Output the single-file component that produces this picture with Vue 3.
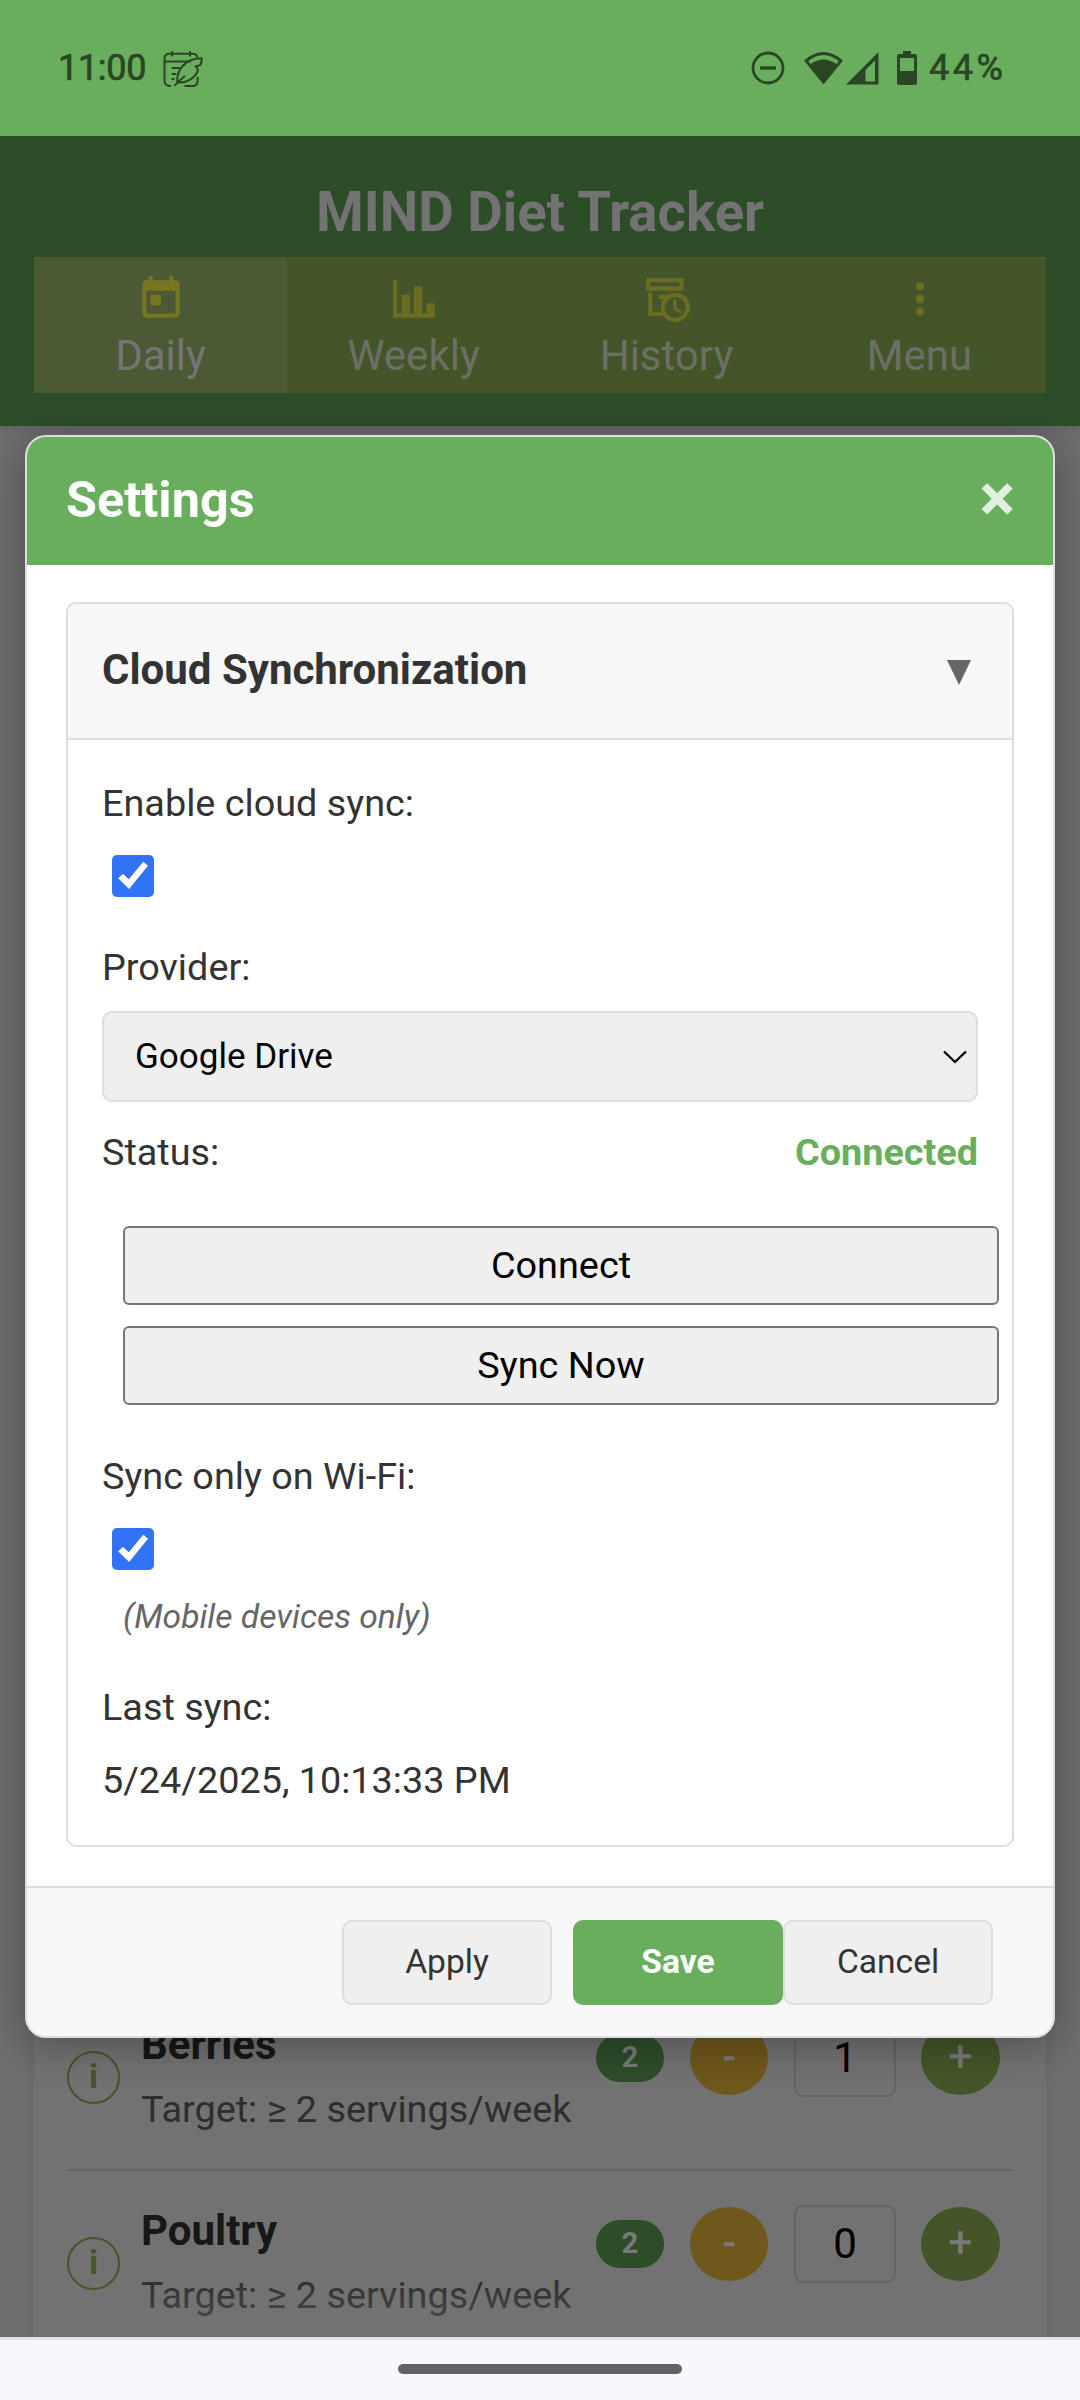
<script setup>
import { ref } from 'vue'

const tabs = [
  { id: 'daily', label: 'Daily' },
  { id: 'weekly', label: 'Weekly' },
  { id: 'history', label: 'History' },
  { id: 'menu', label: 'Menu' },
]
const activeTab = ref('daily')

const foods = [
  { name: 'Berries', target: 'Target: ≥ 2 servings/week', total: 2, today: 1 },
  { name: 'Poultry', target: 'Target: ≥ 2 servings/week', total: 2, today: 0 },
]
</script>

<template>
  <div class="screen">
    <div class="statusbar">
      <span class="clock">11:00</span>
      <svg class="note" width="40" height="38" viewBox="0 0 40 38" fill="none" stroke="currentColor" stroke-width="2">
        <path d="M8 36H7Q1.500 36 1.500 30.500V8.500Q1.500 3.700 6.500 3.700H30Q33.500 3.700 34.500 7.500M1.500 11.600H28M9.200 1V6.500M27 1V6.500M21.500 36H29.500Q34.600 36 34.600 31V27M8.500 18H17M8.500 24H13.500M8.500 29H11.500" />
        <path d="M11.500 36Q15 31.500 22 26M14.300 32.500C13.500 20 22 8.500 38.500 8.300Q39 12 37.300 15L32.800 16.500L35 20C33 27 25 33 14.300 32.500Z" />
      </svg>
      <div class="spacer"></div>
      <svg class="dnd" width="34" height="34" viewBox="0 0 34 34" fill="none" stroke="currentColor">
        <circle cx="17" cy="17" r="15" stroke-width="2.800" />
        <path d="M9 17H25" stroke-width="3.300" />
      </svg>
      <svg class="wifi" width="39" height="34" viewBox="0 0 39 34">
        <path fill="currentColor" fill-rule="evenodd" d="M0 9.500Q19.500-7.500 39 9.500L19.500 33.500ZM4.300 10L6.500 13Q19.500 4 32.500 13L34.700 10Q19.500-2 4.300 10Z" />
      </svg>
      <svg class="cell" width="33" height="34" viewBox="0 0 33 34">
        <path fill="currentColor" fill-rule="evenodd" d="M0 33.500L32.500 1V33.500ZM19.500 19V30.500H29V9.500Z" />
      </svg>
      <svg class="battery" width="20" height="35" viewBox="0 0 20 35">
        <path fill="currentColor" fill-rule="evenodd" d="M6 0H14V3H18Q20 3 20 5V32Q20 34 18 34H2Q0 34 0 32V5Q0 3 2 3H6ZM3 7V20H17V7Z" />
      </svg>
      <span class="percent">44%</span>
    </div>

    <header class="app-header">
      <h1>MIND Diet Tracker</h1>
      <nav>
        <div v-for="tab in tabs" :key="tab.id" class="tab" :class="{ active: tab.id === activeTab }">
          <svg width="50" height="50" viewBox="0 0 24 24" fill="currentColor">
            <path v-if="tab.id === 'daily'" d="M7 10h5v5H7zM19 3h-1V1h-2v2H8V1H6v2H5c-1.110 0-2 .9-2 2v14a2 2 0 0 0 2 2h14a2 2 0 0 0 2-2V5a2 2 0 0 0-2-2zm0 16H5V8h14v11z" />
            <path v-else-if="tab.id === 'weekly'" d="M22 21H2V3h2v16h2v-9h4v9h2V6h4v13h2v-5h4v7z" />
            <g v-else-if="tab.id === 'history'" fill="none" stroke="currentColor">
              <path d="M3 3H19V7H3ZM4 9V19H10.500M8 11H12" stroke-width="2" />
              <circle cx="16" cy="16" r="6" stroke-width="2" />
              <path d="M15.750 12V16.600L19 18.500" stroke-width="1.500" />
            </g>
            <path v-else d="M12 16a2 2 0 1 1 0 4 2 2 0 0 1 0-4m0-6a2 2 0 1 1 0 4 2 2 0 0 1 0-4m0-6a2 2 0 1 1 0 4 2 2 0 0 1 0-4z" />
          </svg>
          <span>{{ tab.label }}</span>
        </div>
      </nav>
    </header>

    <main>
      <div class="card">
        <div v-for="food in foods" :key="food.name" class="food">
          <div class="info">i</div>
          <div class="desc">
            <div class="name">{{ food.name }}</div>
            <div class="target">{{ food.target }}</div>
          </div>
          <div class="controls">
            <span class="badge">{{ food.total }}</span>
            <span class="round minus">-</span>
            <span class="count">{{ food.today }}</span>
            <span class="round plus">+</span>
          </div>
        </div>
      </div>
      <div class="fade"></div>
    </main>

    <div class="gesture"><div class="pill"></div></div>

    <section class="modal">
      <div class="modal-head">
        <h2>Settings</h2>
        <span class="close">×</span>
      </div>
      <div class="panel">
        <div class="panel-head">
          <h3>Cloud Synchronization</h3>
          <svg width="24" height="25" viewBox="0 0 24 25"><path d="M0 0H24L12 25Z" fill="#666" /></svg>
        </div>
        <div class="panel-body">
          <div class="label">Enable cloud sync:</div>
          <svg class="check" width="42" height="42" viewBox="0 0 42 42">
            <rect width="42" height="42" rx="5" fill="#3273f6" />
            <path d="M6.100 23.300L11 19L16.800 24.300L31.200 6.700L36 10.700L17.100 34Z" fill="#fff" />
          </svg>
          <div class="label provider">Provider:</div>
          <div class="select">
            <span>Google Drive</span>
            <svg width="24" height="14" viewBox="0 0 24 14" fill="none" stroke="#000" stroke-width="2.300"><path d="M1 1.500L12 12L23 1.500" /></svg>
          </div>
          <div class="status label"><span>Status:</span><b>Connected</b></div>
          <div class="actions">
            <div class="wide">Connect</div>
            <div class="wide">Sync Now</div>
          </div>
          <div class="label wifi-label">Sync only on Wi-Fi:</div>
          <svg class="check" width="42" height="42" viewBox="0 0 42 42">
            <rect width="42" height="42" rx="5" fill="#3273f6" />
            <path d="M6.100 23.300L11 19L16.800 24.300L31.200 6.700L36 10.700L17.100 34Z" fill="#fff" />
          </svg>
          <div class="hint">(Mobile devices only)</div>
          <div class="label last">Last sync:</div>
          <div class="label date">5/24/2025, 10:13:33 PM</div>
        </div>
      </div>
      <div class="modal-foot">
        <div class="btn apply">Apply</div>
        <div class="btn save">Save</div>
        <div class="btn">Cancel</div>
      </div>
    </section>
  </div>
</template>

<style>
body { margin: 0; }
</style>

<style scoped>
.screen, .screen * { box-sizing: border-box; }
.screen {
  position: relative;
  width: 1080px;
  height: 2400px;
  overflow: hidden;
  display: flex;
  flex-direction: column;
  background: #6e6e6e;
  font-family: Roboto, sans-serif;
  color: #333;
}
svg { display: block; flex: none; }
h1, h2, h3 { margin: 0; font-weight: 700; }

.statusbar {
  flex: none;
  height: 136px;
  background: #69ae5d;
  color: #2a4624;
  display: flex;
  align-items: center;
  padding: 0 73px 0 58px;
  -webkit-text-stroke: 0.7px #2a4624;
}
.statusbar svg { -webkit-text-stroke: 0; }
.clock { font-size: 36px; width: 105px; letter-spacing: -0.3px; }
.note { margin-top: 2px; }
.spacer { flex: 1; }
.wifi { margin-left: 19px; }
.cell { margin-left: 3px; }
.battery { margin-left: 18px; }
.percent { font-size: 36px; width: 78px; margin-left: 12px; letter-spacing: 3.500px; white-space: nowrap; }

.app-header {
  flex: none;
  height: 290px;
  padding: 42px 34px 0;
  background: #2d4d29;
  box-shadow: 0 4px 10px rgba(0, 0, 0, 0.1);
}
h1 {
  font-size: 54.600px;
  line-height: 69px;
  text-align: center;
  color: #737373;
}
nav {
  display: flex;
  height: 136px;
  margin-top: 10px;
  border-top: 2px solid #4b5934;
  background: #445629;
}
.tab {
  flex: 1;
  display: flex;
  flex-direction: column;
  align-items: center;
  padding-top: 15px;
  color: #6b6d22;
}
.tab span { font-size: 42px; line-height: 50px; margin-top: 7px; color: #6c6f66; }
.tab.active { background: #4b5a34; color: #777522; }
.tab.active span { color: #757575; }

main {
  position: relative;
  flex: 1;
  overflow: hidden;
  display: flex;
  flex-direction: column;
  justify-content: flex-end;
  padding: 0 34px;
}
.card {
  flex: none;
  height: 1911px;
  margin-bottom: -20px;
  padding: 0 33px;
  background: #727272;
  display: flex;
  flex-direction: column;
  justify-content: flex-end;
  box-shadow: 0 4px 10px rgba(0, 0, 0, 0.08);
}
.food {
  flex: none;
  height: 186px;
  display: flex;
  border-bottom: 2px solid #646464;
}
.info {
  width: 53px;
  height: 53px;
  margin-top: 66px;
  border: 2px solid #445629;
  border-radius: 50%;
  color: #445629;
  font-weight: 700;
  font-size: 34px;
  line-height: 47px;
  text-align: center;
}
.desc { margin: 35px 0 0 21px; flex: 1; white-space: nowrap; }
.name { font-size: 42px; line-height: 50px; font-weight: 700; color: #171717; }
.target { font-size: 37.800px; line-height: 44px; margin-top: 17px; color: #2e2e2e; }
.controls { height: 78px; margin: 34px 13px 0 0; display: flex; align-items: center; color: #7a7a7a; }
.badge {
  width: 68px;
  height: 48px;
  border-radius: 24px;
  background: #2d4d29;
  font-size: 29.400px;
  font-weight: 700;
  line-height: 46px;
  text-align: center;
}
.round {
  width: 78px;
  height: 74px;
  border-radius: 50%;
  font-size: 42px;
  line-height: 72px;
  text-align: center;
  -webkit-text-stroke: 0.5px #7a7a7a;
}
.minus { margin: 0 26px; background: #6f581b; }
.plus { margin-left: 25px; width: 79px; background: #445629; }
.count {
  width: 102px;
  height: 78px;
  border: 2px solid #646464;
  border-radius: 9px;
  color: #000;
  font-size: 42px;
  line-height: 73px;
  text-align: center;
}
.fade {
  position: absolute;
  left: 67px;
  right: 67px;
  bottom: 0;
  height: 60px;
  background: linear-gradient(rgba(114, 114, 114, 0), rgba(114, 114, 114, 0.500));
}

.gesture {
  flex: none;
  height: 63px;
  border-top: 3px solid #e2e3e8;
  background: #f9f7fe;
  padding-top: 24px;
}
.pill { width: 284px; height: 10px; margin: 0 auto; border-radius: 5px; background: #626266; }

.modal {
  position: absolute;
  left: 25px;
  top: 435px;
  width: 1030px;
  height: 1603px;
  border: 2px solid #ddd;
  border-radius: 21px;
  overflow: hidden;
  background: #fff;
  box-shadow: 0 8px 42px rgba(0, 0, 0, 0.3);
}
.modal-head {
  height: 128px;
  padding: 0 38px 0 39px;
  display: flex;
  align-items: center;
  justify-content: space-between;
  background: #69ae5d;
}
h2 { font-size: 50.400px; line-height: 60px; color: #fff; margin-bottom: 2px; }
.close { font-size: 67px; line-height: 60px; font-weight: 700; color: #e1efdf; margin-bottom: 6px; }
.panel {
  margin: 37px 39px 39px;
  height: 1245px;
  border: 2px solid #ddd;
  border-radius: 10px;
  overflow: hidden;
}
.panel-head {
  height: 136px;
  padding: 0 41px 0 34px;
  display: flex;
  align-items: center;
  justify-content: space-between;
  background: #f7f7f7;
  border-bottom: 2px solid #ddd;
}
h3 { font-size: 42px; line-height: 50px; margin-bottom: 2px; }
.panel-head svg { margin-top: 2px; }
.panel-body { padding: 43px 34px; }
.label { font-size: 37.800px; line-height: 40px; padding-bottom: 2px; white-space: nowrap; }
.check { margin: 30px 0 0 10px; }
.provider { margin-top: 50px; }
.select {
  height: 91px;
  margin-top: 22px;
  padding: 0 9px 0 31px;
  display: flex;
  align-items: center;
  justify-content: space-between;
  background: #efefef;
  border: 2px solid #ddd;
  border-radius: 10px;
  color: #000;
  font-size: 35px;
}
.status { display: flex; justify-content: space-between; margin-top: 30px; }
.status b { color: #69ae5d; }
.actions { margin: 52px 0 0 21px; display: flex; flex-direction: column; gap: 21px; }
.wide {
  width: 876px;
  height: 79px;
  border: 2px solid #767676;
  border-radius: 6px;
  background: #efefef;
  color: #000;
  font-size: 37.800px;
  line-height: 74px;
  text-align: center;
}
.wifi-label { margin-top: 51px; }
.hint { margin: 25px 0 0 21px; font-size: 33.600px; line-height: 43px; font-style: italic; color: #666; }
.last { margin-top: 49px; }
.date { margin-top: 31px; }
.modal-foot {
  height: 150px;
  border-top: 2px solid #ddd;
  background: #f7f7f7;
  display: flex;
  justify-content: flex-end;
  padding: 32px 60px 0 0;
}
.btn {
  width: 210px;
  height: 85px;
  border: 2px solid #ddd;
  border-radius: 10px;
  background: #efefef;
  font-size: 33.600px;
  line-height: 79px;
  text-align: center;
}
.apply { margin-right: 21px; }
.save { background: #69ae5d; border-color: #69ae5d; color: #fff; font-weight: 700; }
</style>
